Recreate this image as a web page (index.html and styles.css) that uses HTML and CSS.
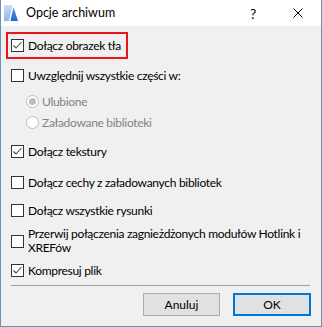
FILE: index.html
```html
<!DOCTYPE html>
<html lang="pl">
<head>
<meta charset="utf-8">
<title>Opcje archiwum</title>
<link rel="stylesheet" href="styles.css">
</head>
<body>
<div class="window">
  <div class="titlebar">
    <svg class="app-icon" width="16" height="16" viewBox="0 0 16 16">
      <defs>
        <linearGradient id="lb" x1="0" y1="0" x2="0" y2="1">
          <stop offset="0" stop-color="#c9ddf5"/>
          <stop offset="1" stop-color="#8db8ea"/>
        </linearGradient>
        <linearGradient id="db" x1="0" y1="0" x2="0" y2="1">
          <stop offset="0" stop-color="#5a9be6"/>
          <stop offset="1" stop-color="#1e66c9"/>
        </linearGradient>
      </defs>
      <rect x="0" y="0" width="16" height="16" fill="url(#lb)"/>
      <polygon points="5,16 8.5,0 16,0 16,16" fill="#ffffff"/>
      <polygon points="6.5,16 9.5,2 14,16" fill="url(#db)"/>
    </svg>
    <span class="title">Opcje archiwum</span>
    <span class="tb-btn help">?</span>
    <span class="tb-btn close">
      <svg width="10" height="10" viewBox="0 0 10 10"><path d="M0.5 0.5 L9.5 9.5 M9.5 0.5 L0.5 9.5" stroke="#000" stroke-width="1" fill="none"/></svg>
    </span>
  </div>
  <div class="content">
    <div class="highlight">
      <div class="check">
        <span class="box"><svg width="11" height="11" viewBox="0 0 11 11"><polyline points="1.5,5.5 4,8 9.5,2" stroke="#4a4a4a" stroke-width="1.1" fill="none"/></svg></span>
        <span class="label">Dołącz obrazek tła</span>
      </div>
    </div>

    <div class="check row-parts">
      <span class="box"></span>
      <span class="label">Uwzględnij wszystkie części w:</span>
    </div>

    <div class="radio row-r1 disabled">
      <span class="dot checked"></span>
      <span class="label">Ulubione</span>
    </div>
    <div class="radio row-r2 disabled">
      <span class="dot"></span>
      <span class="label">Załadowane biblioteki</span>
    </div>

    <div class="check row-tex">
      <span class="box"><svg width="11" height="11" viewBox="0 0 11 11"><polyline points="1.5,5.5 4,8 9.5,2" stroke="#4a4a4a" stroke-width="1.1" fill="none"/></svg></span>
      <span class="label">Dołącz tekstury</span>
    </div>

    <div class="check row-attr">
      <span class="box"></span>
      <span class="label">Dołącz cechy z załadowanych bibliotek</span>
    </div>

    <div class="check row-draw">
      <span class="box"></span>
      <span class="label">Dołącz wszystkie rysunki</span>
    </div>

    <div class="check row-break">
      <span class="box"></span>
      <span class="label multi">Przerwij połączenia zagnieżdżonych modułów Hotlink i<br>XREFów</span>
    </div>

    <div class="check row-zip">
      <span class="box"><svg width="11" height="11" viewBox="0 0 11 11"><polyline points="1.5,5.5 4,8 9.5,2" stroke="#4a4a4a" stroke-width="1.1" fill="none"/></svg></span>
      <span class="label">Kompresuj plik</span>
    </div>
  </div>
  <div class="separator"></div>
  <div class="buttons">
    <span class="btn">Anuluj</span>
    <span class="btn default">OK</span>
  </div>
</div>
</body>
</html>
```

FILE: styles.css
```css
html, body {
  margin: 0;
  padding: 0;
  background: #f0f0f0;
}

body {
  font-family: Lato, "Noto Sans", sans-serif;
  font-size: 12px;
  letter-spacing: -0.3px;
  color: #000;
}

.window {
  width: 322px;
  height: 327px;
  box-sizing: border-box;
  border-left: 1px solid #6c8fb6;
  border-right: 1px solid #6c8fb6;
  border-bottom: 1px solid #6c8fb6;
  background: #f0f0f0;
  display: flex;
  flex-direction: column;
}

.titlebar {
  height: 26px;
  background: #ffffff;
  display: flex;
  align-items: center;
}

.app-icon {
  margin-left: 3px;
  flex: none;
}

.title {
  margin-left: 6px;
  flex: 1;
  font-size: 12.5px;
  letter-spacing: 0;
  line-height: 20px;
  color: #000;
}

.tb-btn {
  width: 46px;
  height: 26px;
  display: flex;
  align-items: center;
  justify-content: center;
  flex: none;
}

.help {
  font-size: 14px;
  margin-right: -1px;
}

.content {
  padding: 0 10px;
  display: flex;
  flex-direction: column;
  align-items: flex-start;
}

.highlight {
  margin-top: 6px;
  margin-left: -5px;
  width: 122px;
  box-sizing: border-box;
  border: 2px solid #e8161c;
  padding: 5px 0 5px 3px;
}

.check, .radio {
  display: flex;
  align-items: center;
  line-height: 13px;
}

.check {
  gap: 4px;
}

.box {
  width: 13px;
  height: 13px;
  box-sizing: border-box;
  border: 1px solid #333333;
  background: #ffffff;
  flex: none;
  display: flex;
  align-items: center;
  justify-content: center;
}

.label {
  white-space: nowrap;
}

.label.multi {
  line-height: 14px;
}

.radio {
  padding-left: 15px;
  gap: 3px;
}

.dot {
  width: 13px;
  height: 13px;
  box-sizing: border-box;
  border: 1px solid #bcbcbc;
  border-radius: 50%;
  background: #ffffff;
  flex: none;
  display: flex;
  align-items: center;
  justify-content: center;
}

.dot.checked::after {
  content: "";
  width: 7px;
  height: 7px;
  border-radius: 50%;
  background: #bcbcbc;
}

.disabled .label {
  color: #838383;
}

.row-parts { margin-top: 10px; }
.row-r1 { margin-top: 13px; }
.row-r2 { margin-top: 8px; }
.row-tex { margin-top: 16px; }
.row-attr { margin-top: 18px; }
.row-draw { margin-top: 15px; }
.row-break { margin-top: 10px; }
.row-zip { margin-top: 9px; }

.separator {
  margin: 8px 11px 0 10px;
  height: 1px;
  background: #a0a0a0;
}

.buttons {
  margin-top: 7px;
  padding-right: 10px;
  display: flex;
  justify-content: flex-end;
  gap: 13px;
}

.btn {
  width: 77px;
  height: 23px;
  box-sizing: border-box;
  border: 1px solid #adadad;
  background: #e1e1e1;
  display: flex;
  align-items: center;
  justify-content: center;
  letter-spacing: 0;
}

.btn.default {
  border: 2px solid #0078d7;
  width: 78px;
}
```
